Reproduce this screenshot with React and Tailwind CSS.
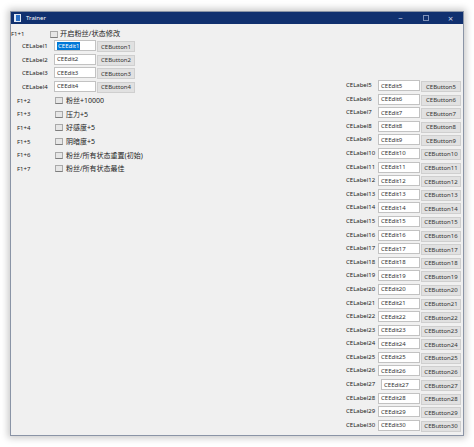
import React from 'react';

const font = { fontFamily: '"Noto Sans", "Noto Sans CJK SC", sans-serif' };

const leftRows = [1, 2, 3, 4];
const rightRows = Array.from({ length: 26 }, (_, i) => i + 5);
const checks = [
  ['F1+2', '粉丝+10000'],
  ['F1+3', '压力+5'],
  ['F1+4', '好感度+5'],
  ['F1+5', '阴暗度+5'],
  ['F1+6', '粉丝/所有状态重置(初始)'],
  ['F1+7', '粉丝/所有状态最佳'],
];

function CheckBox() {
  return <div className="w-[8px] h-[7px] shrink-0 border border-[#a9a9a9] border-b-[#7d7d7d] bg-[#e6e6e6]" />;
}

function Edit({ n, selected, className = 'w-[42px]' }) {
  return (
    <div className={`${className} h-[11px] shrink-0 bg-white border border-[#c2c2c2] flex items-center pl-[2px] text-[6px] text-[#333] leading-none`}>
      {selected ? <span className="bg-[#0078d7] text-white px-[1px] h-[8px] flex items-center">CEEdit{n}</span> : `CEEdit${n}`}
    </div>
  );
}

function Button({ n, className = 'w-[40px]' }) {
  return (
    <div className={`${className} h-[11px] mt-[1px] shrink-0 bg-[#e1e1e1] border border-[#cfcfcf] flex items-center justify-center text-[6px] text-[#333] leading-none`}>
      CEButton{n}
    </div>
  );
}

export default function App() {
  return (
    <div className="w-[474px] h-[447px] bg-white overflow-hidden pt-[11px] pl-[10px]" style={font}>
      <div className="w-[454px] h-[425px] flex flex-col border border-[#8a94a6] bg-[#f0f0f0] shadow-[0_0_7px_2px_rgba(0,0,0,0.22)]">
        {/* title bar */}
        <div className="h-[12px] bg-[#10306f] flex items-center shrink-0">
          <div className="ml-[3px] w-[7px] h-[8px] bg-[#dfe8f5] flex items-center justify-center">
            <div className="w-[4px] h-[6px] bg-[#2b6fc4]" />
          </div>
          <span className="ml-[5px] text-[6px] text-white leading-none">Trainer</span>
          <div className="ml-auto flex items-center h-full text-[#c9d3e6] leading-none">
            <span className="w-[25px] text-center text-[8px]">−</span>
            <span className="w-[25px] flex justify-center">
              <span className="w-[6px] h-[6px] border border-[#7f91b8]" />
            </span>
            <span className="w-[25px] text-center text-[9px]">×</span>
          </div>
        </div>

        {/* client area */}
        <div className="flex-1 flex">
          <div className="w-[335px] shrink-0 pt-[5px] text-[#222]">
            <div className="h-[10px] flex items-center">
              <span className="text-[6px] leading-none w-[39px]">F1+1</span>
              <CheckBox />
              <span className="ml-[2px] text-[7.2px] leading-none">开启粉丝/状态修改</span>
            </div>
            <div className="mt-[1px] pl-[11px]">
              {leftRows.map((n) => (
                <div key={n} className="h-[13.5px] flex items-start">
                  <span className="w-[32px] mt-[3px] text-[6px] leading-none">CELabel{n}</span>
                  <Edit n={n} selected={n === 1} />
                  <div className="w-[1px]" />
                  <Button n={n} className="w-[38px]" />
                </div>
              ))}
            </div>
            <div className="mt-[0px] pl-[6px]">
              {checks.map(([k, t]) => (
                <div key={k} className="h-[13.6px] flex items-center">
                  <span className="w-[38px] text-[6px] leading-none">{k}</span>
                  <CheckBox />
                  <span className="ml-[3px] text-[7px] leading-none">{t}</span>
                </div>
              ))}
            </div>
          </div>

          <div className="pt-[56px] text-[#222]">
            {rightRows.map((n) => (
              <div key={n} className="h-[13.6px] flex items-start">
                <span className="w-[32px] mt-[2px] text-[6px] leading-none">CELabel{n}</span>
                {n === 27 ? <Edit n={n} className="ml-[3px] w-[39px]" /> : <Edit n={n} />}
                <div className="w-[1px]" />
                <Button n={n} />
              </div>
            ))}
          </div>
        </div>
      </div>
    </div>
  );
}
